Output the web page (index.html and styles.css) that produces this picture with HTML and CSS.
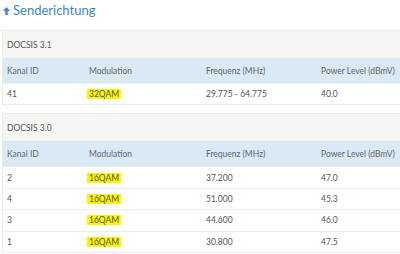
FILE: index.html
```html
<!DOCTYPE html>
<html lang="de">
<head>
<meta charset="utf-8">
<link rel="stylesheet" href="styles.css">
</head>
<body>
<h2 class="title"><svg class="arrow" viewBox="0 0 8 9" width="7" height="8"><path d="M4 0 L8 4.5 H5.4 V9 H2.6 V4.5 H0 Z" fill="#3a86c8"/></svg>Senderichtung</h2>

<section class="group">
  <div class="caption">DOCSIS 3.1</div>
  <table class="tbl">
    <thead><tr><th class="c1">Kanal ID</th><th class="c2">Modulation</th><th class="c3">Frequenz (MHz)</th><th>Power Level (dBmV)</th></tr></thead>
    <tbody>
      <tr><td>41</td><td><span class="mark">32QAM</span></td><td>29.775 - 64.775</td><td>40.0</td></tr>
    </tbody>
  </table>
</section>

<section class="group">
  <div class="caption">DOCSIS 3.0</div>
  <table class="tbl">
    <thead><tr><th class="c1">Kanal ID</th><th class="c2">Modulation</th><th class="c3">Frequenz (MHz)</th><th>Power Level (dBmV)</th></tr></thead>
    <tbody>
      <tr><td>2</td><td><span class="mark">16QAM</span></td><td>37.200</td><td>47.0</td></tr>
      <tr><td>4</td><td><span class="mark">16QAM</span></td><td>51.000</td><td>45.3</td></tr>
      <tr><td>3</td><td><span class="mark">16QAM</span></td><td>44.600</td><td>46.0</td></tr>
      <tr><td>1</td><td><span class="mark">16QAM</span></td><td>30.800</td><td>47.5</td></tr>
    </tbody>
  </table>
</section>
</body>
</html>
```

FILE: styles.css
```css
html, body { margin: 0; padding: 0; background: #fff; }
body {
  font-family: "Lato", "Open Sans", sans-serif;
  color: #555;
  font-size: 8.5px;
  width: 400px;
  overflow: hidden;
}
.title {
  margin: 0;
  padding: 1px 0 0 3px;
  height: 25px;
  font-family: "Lato", sans-serif;
  font-weight: 400;
  font-size: 13px;
  color: #3a86c8;
  display: flex;
  gap: 3px;
  line-height: 18px;
  align-items: flex-start;
}
.arrow { margin-top: 6px; }
.group {
  margin: 4px 0 8px 2px;
  border: 1px solid #ececec;
  border-right: none;
}
.caption {
  background: #f5f5f3;
  height: 27px;
  display: flex;
  align-items: center;
  padding-left: 4px;
}
.tbl {
  width: 100%;
  border-collapse: collapse;
  table-layout: fixed;
}
.tbl th {
  background: #d9e9f6;
  font-weight: 400;
  text-align: left;
  height: 25px;
  padding: 0 0 0 4px;
  color: #666;
  white-space: nowrap;
}
.tbl td {
  height: 20.4px;
  padding: 0 0 0 4px;
  border-top: 1px solid #eee;
  color: #555;
  white-space: nowrap;
}
.c1 { width: 78px; }
.c2 { width: 113px; }
.c3 { width: 111px; }
.mark {
  background: #fbf500;
  padding: 0 2px;
  margin-left: -2px;
}
```
